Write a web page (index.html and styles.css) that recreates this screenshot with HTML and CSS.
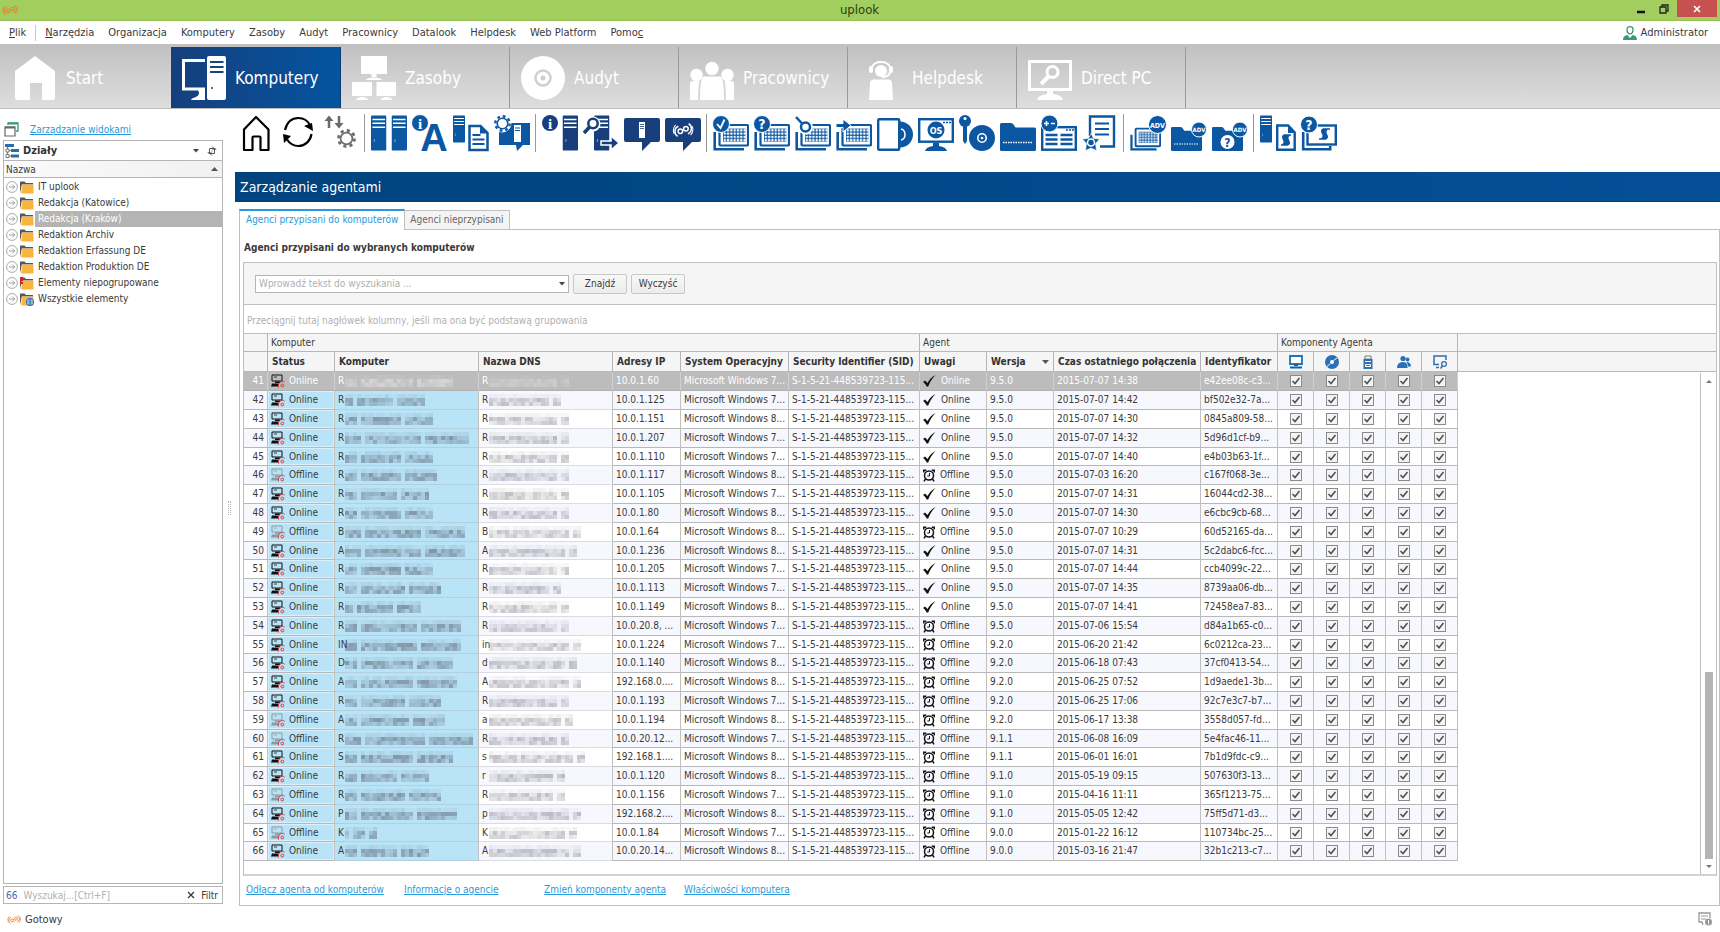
FILE: index.html
```html
<!DOCTYPE html>
<html lang="pl">
<head>
  <meta charset="UTF-8">
  <title>uplook</title>
  <link rel="stylesheet" href="styles.css">
</head>
<body>

  <!-- Symbole ikon -->
  <svg class="symbols" width="0" height="0" aria-hidden="true">
    <defs>
      <pattern id="kratka" width="3.300" height="3.300" patternUnits="userSpaceOnUse" x="10" y="13.500">
        <rect width="3.300" height="3.300" fill="#0b57a2"/>
        <rect x=".7" y=".7" width="2.200" height="2.200" fill="#fff"/>
      </pattern>

      <symbol id="logo" viewBox="0 0 16 12">
        <g fill="none" stroke="currentColor" stroke-width="1.100">
          <circle cx="6" cy="7" r="1.700"/>
          <circle cx="10.200" cy="5" r="1.700"/>
          <path d="M4.500 3.200A4.200 4.200 0 0 0 4 10.700M11.700 8.800A4.200 4.200 0 0 0 12.200 1.300"/>
          <path d="M2.500 2.200A6 6 0 0 0 1.500 9M13.700 9.800A6 6 0 0 0 14.700 3" stroke-width=".8"/>
        </g>
      </symbol>

      <symbol id="serwer" viewBox="0 0 16 36">
        <rect width="16" height="36" rx="1" fill="currentColor"/>
        <path d="M1.500 4h13M1.500 8h13M1.500 12h13" stroke="#fff" stroke-width="1.500"/>
        <path d="M3.500 24.500v2.500" stroke="#fff" stroke-width="1" opacity=".6"/>
      </symbol>

      <symbol id="arkusz" viewBox="0 0 36 36">
        <path d="M1.700 17v17.200h28V33" fill="none" stroke="currentColor" stroke-width="2.600"/>
        <rect x="6.500" y="10" width="28.500" height="20.500" rx="1" fill="#fff" stroke="currentColor" stroke-width="2.200"/>
        <rect x="10" y="13.500" width="22.400" height="13.200" fill="url(#kratka)"/>
      </symbol>

      <symbol id="folder" viewBox="0 0 36 36">
        <path d="M0 9.500Q0 8 1.500 8H11q1.500 0 2.500 1.500l2 3H34.500q1.500 0 1.500 1.500V34.500q0 1.500-1.500 1.500H1.500Q0 36 0 34.500Z" fill="currentColor"/>
      </symbol>

      <symbol id="zebatka" viewBox="0 0 16 16">
        <circle cx="8" cy="8" r="6.800" fill="none" stroke="currentColor" stroke-width="2.200" stroke-dasharray="2.670 2.670"/>
        <circle cx="8" cy="8" r="5" fill="none" stroke="currentColor" stroke-width="1.500"/>
      </symbol>

      <symbol id="komputer" viewBox="0 0 14 14">
        <path d="M1 1h10v6H1Z" fill="none" stroke="currentColor"/>
        <path d="M3 3h3" stroke="currentColor" stroke-width=".8"/>
        <path d="M4 7.500h5v1.500H4z" fill="currentColor"/>
        <path d="M1 9.500h6.500v3H0z" fill="currentColor"/>
        <g fill="none" stroke="#e0343a" stroke-width="1">
          <circle cx="11.300" cy="11.500" r="1.400"/>
          <path d="M7.500 13.500c-.5-3.500 1-6 4-6 1.300 0 2 .3 2.300.800"/>
        </g>
      </symbol>

      <symbol id="ptaszek" viewBox="0 0 13 12">
        <path d="M0 7l2-1.500 2.500 2.500C6.500 4.500 9 1.800 12.500 0 9 3.500 6.800 7.300 5.200 11.500H3.600C2.800 9.500 1.500 8 0 7Z" fill="currentColor"/>
      </symbol>

      <symbol id="zegar" viewBox="0 0 12 13">
        <circle cx="6" cy="6.500" r="4.500" fill="none" stroke="currentColor" stroke-width="1.500"/>
        <path d="M6.500 4v3H4.300" fill="none" stroke="currentColor" stroke-width="1"/>
        <path d="M.8 3.500V1.300h2.500M8.700 1.300h2.500v2.200M2.500 10L1 12.300M9.500 10l1.500 2.300" fill="none" stroke="currentColor" stroke-width="1.500"/>
      </symbol>

      <symbol id="teczka" viewBox="0 0 14 13">
        <path d="M0 12V.5h4.500L6 2h7v2H2Z" fill="#56585c"/>
        <path d="M2 3.500h11.500v9H1Z" fill="#fbb53c"/>
        <path d="M1 12.500L2 3.500h11" fill="none" stroke="#fff" stroke-width=".6" opacity=".6"/>
      </symbol>

      <symbol id="strzalka" viewBox="0 0 12 12">
        <circle cx="6" cy="6" r="5.400" fill="#fff" stroke="#a9a9a9"/>
        <path d="M3 6h5.500M6.300 3.500L8.800 6 6.300 8.500" fill="none" stroke="#a0a0a0"/>
      </symbol>
    </defs>
  </svg>

  <div class="app">
    <header class="titlebar">
      <svg class="titlebar-logo" width="16" height="12"><use href="#logo"/></svg>
      <h1 class="titlebar-name">uplook</h1>
      <div class="window-buttons">
        <button class="window-btn" aria-label="Minimalizuj"><svg width="10" height="10" viewBox="0 0 10 10"><path d="M1 8h8" stroke="#111" stroke-width="2.500"/></svg></button>
        <button class="window-btn" aria-label="Przywróć"><svg width="10" height="10" viewBox="0 0 10 10"><path d="M1 3h6v6H1zM3 3V1h6v6H7" fill="none" stroke="#222" stroke-width="1.300"/></svg></button>
        <button class="window-btn close" aria-label="Zamknij"><svg width="8" height="8" viewBox="0 0 8 8"><path d="M1 1l6 6M7 1L1 7" stroke="#fff" stroke-width="1.700"/></svg></button>
      </div>
    </header>

    <nav class="menu">
      <a href="#"><u>P</u>lik</a>
      <span class="menu-line"></span>
      <a href="#"><u>N</u>arzędzia</a>
      <a href="#">Organizacja</a>
      <a href="#">Komputery</a>
      <a href="#">Zasoby</a>
      <a href="#">Audyt</a>
      <a href="#">Pracownicy</a>
      <a href="#">Datalook</a>
      <a href="#">Helpdesk</a>
      <a href="#">Web Platform</a>
      <a href="#">Pomo<u>c</u></a>
      <a class="user" href="#">
        <svg width="14" height="14" viewBox="0 0 14 14"><path d="M4 3.500C4 1.500 5 .7 7 .7s3 .8 3 2.800c0 2.500-1.200 4.300-3 4.300S4 6 4 3.500Z" fill="#fff" stroke="#3a9a78" stroke-width="1.300"/><path d="M0 14c0-3 1.500-4.500 4.500-5L7 12l2.500-3c3 .5 4.500 2 4.500 5Z" fill="#3a9a78"/></svg>
        Administrator
      </a>
    </nav>

    <nav class="modules">
      <a class="module" href="#"><svg width="44" height="44" viewBox="0 0 44 44"><path d="M22 0L42 15v27q0 2-2 2H29V27H17v17H4q-2 0-2-2V15Z" fill="#fff"/></svg>Start</a>
      <a class="module active" href="#"><svg width="44" height="44" viewBox="0 0 44 44"><path d="M23 4.500H1.500V33H23" fill="none" stroke="#fff" stroke-width="3"/><path d="M16 33h7v11H9c1-3 8-2 8-7Z" fill="#fff"/><rect x="25" width="19" height="44" rx="2" fill="#fff"/><path d="M28 6h13.500M28 11h13.500M28 16h13.500" stroke="#124685" stroke-width="2"/><circle cx="30" cy="32" r="1" fill="#124685"/></svg>Komputery</a>
      <a class="module" href="#"><svg width="44" height="44" viewBox="0 0 44 44"><g fill="#fff"><path d="M9 0h26v18H9zM19.500 18h5v3h-5z"/><path d="M14 24q0-2 8-2.500 8 .5 8 2.500Z"/><path d="M0 26h20v14H0zM24.500 26H44v14H24.500zM4 44q1-3 6-3t6 3ZM28.500 44q1-3 6-3t6 3Z"/></g></svg>Zasoby</a>
      <a class="module" href="#"><svg width="44" height="44" viewBox="0 0 44 44"><circle cx="22" cy="22" r="22" fill="#fff"/><circle cx="22" cy="22" r="7.500" fill="none" stroke="#cfcfcf" stroke-width="2.500"/><circle cx="22" cy="22" r="2.500" fill="#cfcfcf"/></svg>Audyt</a>
      <a class="module" href="#"><svg width="44" height="44" viewBox="0 0 44 44"><g fill="#fff"><circle cx="22" cy="12.500" r="6.700"/><circle cx="6.500" cy="19" r="6.200"/><circle cx="37.500" cy="19" r="6.200"/><path d="M0 44V28q0-3 3-3h6.500q-1.500 6-1.500 19ZM44 44V28q0-3-3-3h-6.500q1.500 6 1.500 19ZM10 44q0-23 3.500-23.500h17Q34 21 34 44Z"/></g></svg>Pracownicy</a>
      <a class="module" href="#"><svg width="44" height="44" viewBox="0 0 44 44"><g fill="#fff"><circle cx="22" cy="15" r="6"/><path d="M10 44l1-17q0-3 3-3.500h16q3 .5 3 3.500l1 17Z"/><rect x="10" y="10" width="4" height="7" rx="2"/><rect x="30" y="10" width="4" height="7" rx="2"/></g><path d="M13 11Q15 6 22 6t9 5M31 16q-1 5-8 5" fill="none" stroke="#fff" stroke-width="2"/></svg>Helpdesk</a>
      <a class="module" href="#"><svg width="44" height="44" viewBox="0 0 44 44"><rect x="1.500" y="5.500" width="41" height="28" fill="none" stroke="#fff" stroke-width="3"/><circle cx="24.500" cy="16" r="5.500" fill="none" stroke="#fff" stroke-width="3"/><path d="M20.500 20.500L13 28" stroke="#fff" stroke-width="4"/><path d="M19 34h6v4q9 1 10 6H9q1-5 10-6Z" fill="#fff"/></svg>Direct PC</a>
    </nav>

    <div class="workspace">
      <aside class="sidebar">
        <div class="views">
          <svg width="15" height="15" viewBox="0 0 15 15"><path d="M4 3V1h10v8h-2" fill="none" stroke="#3a9a78" stroke-width="1.300"/><path d="M4 1.500h10" stroke="#3a9a78" stroke-width="2"/><path d="M1 5h10v9H1z" fill="#fff" stroke="#666" stroke-width="1.200"/><path d="M1 5.500h10" stroke="#666" stroke-width="2"/></svg>
          <a class="link" href="#">Zarządzanie widokami</a>
        </div>
        <section class="tree-box">
          <div class="tree-title">
            <svg width="14" height="14" viewBox="0 0 14 14"><path d="M0 0h9v3H0zM6 5h8v3H6zM6 10.500h8v3H6z" fill="#2b6cab"/><path d="M2.500 3v2M3.500 6.500H6M3.500 12H6M2.500 8v2" stroke="#777"/><path d="M1 5h3v3H1zM1 10.500h3v3H1z" fill="#fff" stroke="#777"/></svg>
            <h2>Działy</h2>
            <button class="icon-btn" aria-label="Wybierz widok"><svg width="6" height="4" viewBox="0 0 6 4"><path d="M0 0h6L3 3.500Z" fill="#444"/></svg></button>
            <button class="icon-btn" aria-label="Odśwież"><svg width="10" height="10" viewBox="0 0 10 10"><path d="M2.500 8V2.500H7M5 .5l2 2-2 2M7.500 2v5.500H3M5 5.500l-2 2 2 2M.8 6l1.700 2M9.200 4L7.500 2" fill="none" stroke="#444" stroke-width=".9"/></svg></button>
          </div>
          <button class="tree-head">Nazwa <svg width="7" height="4" viewBox="0 0 7 4"><path d="M0 4h7L3.500 0Z" fill="#555"/></svg></button>
          <ul class="tree" id="drzewo"></ul>
        </section>
        <div class="tree-search">
          <span class="count">66</span>
          <input type="text" aria-label="Wyszukaj" placeholder="Wyszukaj...[Ctrl+F]">
          <button class="icon-btn" aria-label="Wyczyść filtr"><svg width="8" height="8" viewBox="0 0 8 8"><path d="M1 1l6 6M7 1L1 7" stroke="#333" stroke-width="1.200"/></svg></button>
          <button class="icon-btn">Filtr</button>
        </div>
      </aside>

      <div class="splitter"><span></span></div>

      <main class="content">
        <div class="toolbar">
          <div class="tool-group plain">
            <button aria-label="Start"><svg viewBox="0 0 36 36"><path d="M6 35V14.500L18 2l12.500 12.500V35h-8V22.500q0-1-1-1h-6q-1 0-1 1V35Z" fill="none" stroke="#000" stroke-width="2.200" stroke-linejoin="round"/></svg></button>
            <button aria-label="Odśwież"><svg viewBox="0 0 36 36"><path d="M5 15C7 7 12 3 18.500 3c5 0 9 2.500 11.500 7M31.500 19c-1 7-6.500 12-13 12C14 31 10 29 7 24.500" fill="none" stroke="#000" stroke-width="2.200"/><path d="M24 11l8-3 1 8ZM3 19l8 2-7 7Z" fill="#000"/></svg></button>
            <button class="grey" aria-label="Synchronizacja"><svg viewBox="0 0 36 36"><path d="M7 13V4M17 1v9" stroke="currentColor" stroke-width="2.500"/><path d="M2.500 6L7 .5 11.500 6ZM12.500 8L17 13.500 21.500 8Z" fill="currentColor"/><use href="#zebatka" x="15" y="14" width="19" height="19"/></svg></button>
          </div>
          <div class="tool-group">
            <button aria-label="Komputery"><svg viewBox="0 0 36 36"><use href="#serwer" width="15.500" height="36"/><use href="#serwer" x="20.500" width="15.500" height="36"/></svg></button>
            <button aria-label="Informacje"><svg viewBox="0 0 36 36"><text x="22" y="35.500" font-size="38" class="svg-bold">A</text><circle cx="8" cy="8" r="8.500" fill="currentColor" stroke="#fff"/><text x="8" y="13.500" font-size="15" class="svg-serif">i</text></svg></button>
            <button aria-label="Raport"><svg viewBox="0 0 36 36"><use href="#serwer" width="12" height="28"/><path d="M16.500 11h11l7 7v17h-18Z" fill="#fff" stroke="currentColor" stroke-width="2.500"/><path d="M27 10v8.500h8.500Z" fill="currentColor"/><path d="M19.500 20h8M19.500 24.500h12M19.500 29h12" stroke="currentColor" stroke-width="2"/></svg></button>
            <button aria-label="Zadania"><svg viewBox="0 0 36 36"><path d="M5 8h31v22h-7l-6 6-1-6H5Z" fill="currentColor"/><circle cx="8" cy="8" r="9.500" fill="#fff"/><use href="#zebatka" width="17" height="17"/><rect x="20" y="10" width="7" height="17" fill="#fff"/><path d="M21 13h5M21 15.500h5" stroke="currentColor"/></svg></button>
          </div>
          <div class="tool-group dark">
            <button aria-label="Informacje o komputerze"><svg viewBox="0 0 36 36"><circle cx="8" cy="8" r="8" fill="currentColor"/><text x="8" y="13.500" font-size="15" class="svg-serif">i</text><use href="#serwer" x="20.500" width="15.500" height="36"/></svg></button>
            <button aria-label="Szukaj komputera"><svg viewBox="0 0 36 36"><use href="#serwer" x="11" width="15.500" height="36"/><circle cx="10" cy="9" r="7.500" fill="#fff"/><circle cx="10" cy="8.500" r="4.700" fill="#fff" stroke="currentColor" stroke-width="2.500"/><path d="M6.500 12L1 18" stroke="currentColor" stroke-width="3.500"/><path d="M18 26h10v-5l8 7-8 7v-5H18Z" fill="currentColor" stroke="#fff" stroke-width="1.500"/></svg></button>
            <button aria-label="Wiadomość do komputera"><svg viewBox="0 0 36 36"><path d="M0 5q0-2 2-2h32q2 0 2 2v20q0 2-2 2h-7l-9 9V27H2q-2 0-2-2Z" fill="currentColor"/><rect x="15" y="7" width="6" height="16" fill="#fff"/><path d="M16 9.500h4M16 11.500h4M16 13.500h4" stroke="currentColor" stroke-width=".8"/></svg></button>
            <button aria-label="Wiadomość"><svg viewBox="0 0 36 36"><path d="M0 5q0-2 2-2h32q2 0 2 2v20q0 2-2 2h-7l-9 9V27H2q-2 0-2-2Z" fill="currentColor"/><use href="#logo" x="7" y="7" width="22" height="16" class="white"/></svg></button>
          </div>
          <div class="tool-group">
            <button aria-label="Audyt wykonany"><svg viewBox="0 0 36 36"><use href="#arkusz"/><circle cx="8" cy="9" r="8.500" fill="currentColor" stroke="#fff"/><path d="M4 9l3.500 4L11.500 4.500" fill="none" stroke="#fff" stroke-width="1.800"/></svg></button>
            <button aria-label="Audyt nieznany"><svg viewBox="0 0 36 36"><use href="#arkusz"/><circle cx="8" cy="9" r="8.500" fill="currentColor" stroke="#fff"/><text x="8" y="14" font-size="14" class="svg-white">?</text></svg></button>
            <button aria-label="Szukaj w audycie"><svg viewBox="0 0 36 36"><use href="#arkusz"/><circle cx="10.500" cy="12" r="7.500" fill="#fff"/><circle cx="10.500" cy="12" r="4.500" fill="#fff" stroke="currentColor" stroke-width="2.500"/><path d="M7 8.500L1 2" stroke="currentColor" stroke-width="2.500"/></svg></button>
            <button aria-label="Przenieś"><svg viewBox="0 0 36 36"><use href="#arkusz"/><path d="M0 8.500h7V4l8 6.500L7 17v-4.500H0Z" fill="currentColor" stroke="#fff"/></svg></button>
            <button aria-label="Oprogramowanie"><svg viewBox="0 0 36 36"><circle cx="23" cy="19.500" r="13" fill="currentColor"/><path d="M24 14q4 1 4 5.500T24 25" fill="none" stroke="#fff" stroke-width="1.500"/><rect x="1.200" y="4.200" width="21" height="30.500" rx="1" fill="#fff" stroke="currentColor" stroke-width="2.400"/></svg></button>
            <button aria-label="System operacyjny"><svg viewBox="0 0 36 36"><rect x="1.200" y="4.200" width="33.600" height="22.500" fill="#fff" stroke="currentColor" stroke-width="2.400"/><circle cx="18" cy="15" r="8.500" fill="currentColor"/><text x="18" y="18.500" font-size="9" class="svg-white">OS</text><path d="M25 7.500h8" stroke="currentColor" stroke-width="1.500" stroke-dasharray="2 1"/><path d="M15 28h6v3q7 1 8 5H7q1-4 8-5Z" fill="currentColor"/></svg></button>
            <button aria-label="Licencje"><svg viewBox="0 0 36 36"><circle cx="6" cy="6" r="6" fill="currentColor"/><circle cx="6" cy="3.500" r="1.500" fill="#fff"/><path d="M4 11h4v15l-2 3-2-3Z" fill="currentColor"/><circle cx="23" cy="23" r="13" fill="currentColor"/><circle cx="23" cy="23" r="4.200" fill="none" stroke="#fff" stroke-width="1.600"/><circle cx="23" cy="23" r="1.300" fill="#fff"/></svg></button>
            <button aria-label="Pliki"><svg viewBox="0 0 36 36"><use href="#folder"/><path d="M3 27.500h30" stroke="#fff" stroke-width="1.300" stroke-dasharray="1.500 1"/></svg></button>
            <button aria-label="Zmiany"><svg viewBox="0 0 36 36"><rect x="1.200" y="12.200" width="33.600" height="22.500" fill="#fff" stroke="currentColor" stroke-width="2.400"/><path d="M4.500 20h12M4.500 24.500h12M4.500 29h12M19.500 20h12M19.500 24.500h12M19.500 29h12" stroke="currentColor" stroke-width="2.400"/><path d="M25 15h8" stroke="currentColor" stroke-width="1.500" stroke-dasharray="2 1"/><circle cx="8.500" cy="8.500" r="8.500" fill="currentColor" stroke="#fff"/><path d="M3 8.500h5M5.500 6v5M10 8.500h4" stroke="#fff" stroke-width="1.500"/></svg></button>
            <button aria-label="Certyfikaty"><svg viewBox="0 0 36 36"><path d="M8 21V1.500h24v30H18" fill="#fff" stroke="currentColor" stroke-width="2.400"/><path d="M13 8.500h14M13 14h14M13 19.500h14" stroke="currentColor" stroke-width="2.200"/><path d="M9 18.500l2.600 5 5.900.500-4 4.500 1 7-5.500-2.500-5.500 2.500 1-7-4-4.500 5.900-.500Z" fill="currentColor" stroke="#fff" stroke-width=".6"/><circle cx="9" cy="27.500" r="3.500" fill="none" stroke="#fff" stroke-width="1.500"/></svg></button>
          </div>
          <div class="tool-group">
            <button aria-label="Audyt ADV"><svg viewBox="0 0 36 36"><use href="#arkusz" y="5" width="31" height="31"/><circle cx="27.500" cy="9.500" r="9" fill="currentColor" stroke="#fff"/><text x="27.500" y="12.500" font-size="7" class="svg-white">ADV</text></svg></button>
            <button aria-label="Pliki ADV"><svg viewBox="0 0 36 36"><use href="#folder" y="5" width="31" height="31"/><path d="M3 29h25" stroke="#fff" stroke-dasharray="1.500 1"/><circle cx="28" cy="14.500" r="7.500" fill="currentColor" stroke="#fff"/><text x="28" y="17" font-size="6" class="svg-white">ADV</text></svg></button>
            <button aria-label="Nieznane pliki ADV"><svg viewBox="0 0 36 36"><use href="#folder" y="5" width="31" height="31"/><circle cx="15.500" cy="27" r="7" fill="#fff"/><text x="15.500" y="31.500" font-size="12" class="svg-blue">?</text><circle cx="28" cy="14.500" r="7.500" fill="currentColor" stroke="#fff"/><text x="28" y="17" font-size="6" class="svg-white">ADV</text></svg></button>
          </div>
          <div class="tool-group">
            <button aria-label="Skrypty komputera"><svg viewBox="0 0 36 36"><use href="#serwer" width="12" height="28"/><path d="M17.200 10.500h11l6.500 7v17.300H17.200Z" fill="#fff" stroke="currentColor" stroke-width="2.400"/><path d="M28 10v8h7.500Z" fill="currentColor"/><path d="M31 20h-6.500q-3 1-1 4.500t-1 5.500H21h6.500q3-1 1-4.500t1-5.500Z" fill="currentColor" stroke="currentColor" stroke-width="1.500"/></svg></button>
            <button aria-label="Nieznane skrypty"><svg viewBox="0 0 36 36"><path d="M2.200 17v17.200h27V31" fill="none" stroke="currentColor" stroke-width="2.600"/><rect x="6.500" y="10.500" width="28.300" height="19" fill="#fff" stroke="currentColor" stroke-width="2.400"/><path d="M29 14h-6.500q-3 1-1 4.500t-1 5.500H18h6.500q3-1 1-4.500t1-5.500Z" fill="currentColor" stroke="currentColor" stroke-width="1.500"/><circle cx="8" cy="9.500" r="8.500" fill="currentColor" stroke="#fff"/><text x="8" y="14.500" font-size="14" class="svg-white">?</text></svg></button>
          </div>
        </div>

        <h2 class="page-title">Zarządzanie agentami</h2>

        <div class="tabs" role="tablist">
          <button class="tab active" role="tab" aria-selected="true">Agenci przypisani do komputerów</button>
          <button class="tab" role="tab" aria-selected="false">Agenci nieprzypisani</button>
        </div>

        <section class="panel">
          <h3>Agenci przypisani do wybranych komputerów</h3>
          <div class="box">
            <form class="search">
              <div class="combo">
                <input type="text" aria-label="Tekst do wyszukania" placeholder="Wprowadź tekst do wyszukania ...">
                <button type="button" class="icon-btn" aria-label="Historia wyszukiwania"><svg width="6" height="4" viewBox="0 0 6 4"><path d="M0 0h6L3 3.500Z" fill="#444"/></svg></button>
              </div>
              <button type="button" class="btn">Znajdź</button>
              <button type="button" class="btn">Wyczyść</button>
            </form>
            <p class="group-hint">Przeciągnij tutaj nagłówek kolumny, jeśli ma ona być podstawą grupowania</p>

            <div class="grid">
              <table>
                <colgroup>
                  <col class="c-nr"><col class="c-status"><col class="c-komputer"><col class="c-dns"><col class="c-ip"><col class="c-system"><col class="c-sid"><col class="c-uwagi"><col class="c-wersja"><col class="c-czas"><col class="c-ident"><col class="c-check"><col class="c-check"><col class="c-check"><col class="c-check"><col class="c-check"><col>
                </colgroup>
                <thead>
                  <tr class="bands">
                    <th></th>
                    <th colspan="6">Komputer</th>
                    <th colspan="4">Agent</th>
                    <th colspan="5">Komponenty Agenta</th>
                    <th></th>
                  </tr>
                  <tr class="heads">
                    <th></th>
                    <th>Status</th>
                    <th>Komputer</th>
                    <th>Nazwa DNS</th>
                    <th>Adresy IP</th>
                    <th>System Operacyjny</th>
                    <th>Security Identifier (SID)</th>
                    <th>Uwagi</th>
                    <th class="sorted">Wersja <svg width="7" height="4" viewBox="0 0 7 4"><path d="M0 0h7L3.500 4Z" fill="#555"/></svg></th>
                    <th>Czas ostatniego połączenia</th>
                    <th>Identyfikator</th>
                    <th class="comp"><svg width="14" height="14" viewBox="0 0 14 14" role="img" aria-label="Komputer"><path d="M1 1h12v8H1z" fill="#fff" stroke="#1b74bd" stroke-width="1.800"/><path d="M5 9h4v2H5zM1 11.500h12v2H1z" fill="#1b5ea0"/></svg></th>
                    <th class="comp"><svg width="14" height="14" viewBox="0 0 14 14" role="img" aria-label="Płyty"><circle cx="7" cy="7" r="7" fill="#2c6fb3"/><circle cx="7" cy="7" r="2" fill="#fff"/><path d="M8.500 5.500L12 3M5.500 8.500L2 11.500" stroke="#fff"/></svg></th>
                    <th class="comp"><svg width="14" height="14" viewBox="0 0 14 14" role="img" aria-label="USB"><path d="M4 1h6v3H4z" fill="#fff" stroke="#777"/><path d="M2.500 4h9v10h-9z" fill="#2c6fb3"/><path d="M4 6.500h6M4.500 9.500h5v2h-5z" fill="none" stroke="#fff"/></svg></th>
                    <th class="comp"><svg width="14" height="14" viewBox="0 0 14 14" role="img" aria-label="Pracownicy"><g fill="#2c6fb3"><circle cx="6" cy="3.500" r="2.600"/><path d="M0 13q0-5.500 5.500-6T10.500 13Z"/><circle cx="10.500" cy="4.500" r="2"/><path d="M9.500 7q4.500 0 4.500 4.500h-3q0-2.500-1.500-4.500Z"/></g></svg></th>
                    <th class="comp"><svg width="14" height="14" viewBox="0 0 14 14" role="img" aria-label="Direct PC"><path d="M6 9.500H1V1h12v4" fill="none" stroke="#2c6fb3" stroke-width="1.500"/><path d="M3 12.500h3" stroke="#2c6fb3" stroke-width="1.500"/><circle cx="11" cy="9" r="2.400" fill="none" stroke="#2c6fb3" stroke-width="1.300"/><path d="M9.500 11L7.500 13.500" stroke="#2c6fb3" stroke-width="1.500"/></svg></th>
                    <th></th>
                  </tr>
                </thead>
                <tbody id="agenci"></tbody>
              </table>
              <div class="scrollbar">
                <svg width="6" height="3" viewBox="0 0 6 3"><path d="M0 3h6L3 0Z" fill="#777"/></svg>
                <span class="thumb"></span>
                <svg width="6" height="3" viewBox="0 0 6 3"><path d="M0 0h6L3 3Z" fill="#777"/></svg>
              </div>
            </div>
          </div>
          <div class="actions">
            <a class="link" href="#">Odłącz agenta od komputerów</a>
            <a class="link" href="#">Informacje o agencie</a>
            <a class="link" href="#">Zmień komponenty agenta</a>
            <a class="link" href="#">Właściwości komputera</a>
          </div>
        </section>
      </main>
    </div>

    <footer class="statusbar">
      <svg class="titlebar-logo" width="14" height="11"><use href="#logo"/></svg>
      <span>Gotowy</span>
      <svg class="notes" width="14" height="14" viewBox="0 0 14 14"><path d="M12 6V1H1v9h3l1 3" fill="none" stroke="#999" stroke-width="1.300"/><path d="M3 4h7M3 7h5" stroke="#999" stroke-width="1.200"/><circle cx="10.500" cy="10" r="3.500" fill="#999"/><path d="M10.500 8v3M10.500 11.500v1" stroke="#fff"/></svg>
    </footer>
  </div>

  <script src="script.js"></script>
</body>
</html>
```
FILE: styles.css
```css
* {
  box-sizing: border-box;
}

body {
  margin: 0;
  background-color: white;
  color: #3a3a3a;
  font-family: 'DejaVu Sans Condensed', 'DejaVu Sans', sans-serif;
  font-size: 10px;
}

h1, h2, h3, p, ul {
  margin: 0;
  padding: 0;
}

button, input {
  font-family: inherit;
  font-size: inherit;
  color: inherit;
}

button {
  background: none;
  border: none;
  padding: 0;
}

svg {
  display: block;
}

.symbols {
  position: absolute;
}

.app {
  display: flex;
  flex-direction: column;
  min-height: 100vh;
}

/* Pasek tytułu */
.titlebar {
  display: grid;
  grid-template-columns: 1fr auto 1fr;
  align-items: center;
  height: 21px;
  padding: 0 3px 0 2px;
  background-color: #a1ce5f;
  border-bottom: 1px solid #93bf55;
}

.titlebar-logo {
  color: #f0802a;
}

.titlebar-name {
  font-size: 13px;
  font-weight: normal;
  line-height: 20px;
  color: #2d3d14;
}

.window-buttons {
  display: flex;
  justify-content: flex-end;
  align-self: start;
}

.window-btn {
  display: flex;
  align-items: center;
  justify-content: center;
  width: 23px;
  height: 17px;
}

.window-btn.close {
  width: 40px;
  margin-left: 2px;
  background-color: #c75050;
}

/* Menu */
.menu {
  display: flex;
  align-items: center;
  gap: 14px;
  height: 23px;
  padding: 0 12px 0 9px;
  font-size: 11px;
}

.menu a {
  color: #3a3a3a;
  text-decoration: none;
}

.menu-line {
  width: 1px;
  height: 16px;
  margin: 0 -5px;
  background-color: #c8c8c8;
}

.menu .user {
  display: flex;
  align-items: center;
  gap: 4px;
  margin-left: auto;
}

/* Moduły */
.modules {
  display: flex;
  height: 65px;
  padding-top: 3px;
  background: linear-gradient(#c0c0c0, #dedede);
  border-bottom: 1px solid #bdbdbd;
}

.module {
  display: flex;
  align-items: center;
  gap: 9px;
  width: 169px;
  padding-left: 11px;
  border-right: 1px solid #999;
  color: white;
  font-size: 17px;
  text-decoration: none;
}

.module:first-child {
  width: 171px;
  padding-left: 13px;
  border-right: none;
}

.module.active {
  width: 170px;
  border-right: 1px solid #0b3a70;
  background: linear-gradient(90deg, #163f7c, #0454a0);
}

/* Obszar roboczy */
.workspace {
  display: flex;
  flex: 1;
}

.sidebar {
  display: flex;
  flex-direction: column;
  width: 220px;
  margin-left: 3px;
  padding-bottom: 2px;
}

.views {
  display: flex;
  align-items: center;
  gap: 11px;
  height: 31px;
  padding: 9px 0 0 1px;
}

.link {
  color: #2a9ade;
}

.tree-box {
  flex: 1;
  border: 1px solid #b5b5b5;
}

.tree-title {
  display: flex;
  align-items: center;
  gap: 4px;
  height: 19px;
  padding: 0 5px 0 1px;
}

.tree-title h2 {
  flex: 1;
  font-size: 11px;
  color: #333;
}

.tree-title .icon-btn {
  margin-left: 4px;
}

.tree-head {
  display: flex;
  align-items: center;
  justify-content: space-between;
  width: 100%;
  height: 18px;
  padding: 0 4px 0 2px;
  background: linear-gradient(90deg, #fafafa, #f1f1f1);
  border-top: 1px solid #b5b5b5;
  border-bottom: 1px solid #b5b5b5;
}

.tree {
  padding-top: 1px;
  list-style: none;
}

.tree a {
  display: flex;
  align-items: center;
  height: 16px;
  padding-left: 2px;
  color: #3a3a3a;
  text-decoration: none;
}

.tree span {
  flex: 1;
  margin-left: 1px;
  padding-left: 3px;
  line-height: 16px;
}

.tree svg + svg {
  margin-left: 2px;
}

.tree .selected span {
  background-color: #b4b4b4;
  color: white;
}

.tree-search {
  display: flex;
  align-items: center;
  gap: 6px;
  height: 18px;
  margin-top: 2px;
  padding: 0 4px 0 2px;
  border: 1px solid #b5b5b5;
}

.tree-search input {
  flex: 1;
  min-width: 0;
  padding: 0;
  border: none;
}

.count {
  color: #3d6cb4;
}

::placeholder {
  color: #b0b0b0;
  opacity: 1;
}

.splitter {
  display: flex;
  align-items: center;
  justify-content: center;
  width: 12px;
}

.splitter span {
  width: 3px;
  height: 14px;
  border: 1px dotted #b5b5b5;
  border-width: 0 1px;
}

/* Pasek narzędzi */
.content {
  display: flex;
  flex: 1;
  flex-direction: column;
  min-width: 0;
}

.toolbar {
  display: flex;
  height: 63px;
  padding: 5px 0 0 3px;
}

.tool-group {
  display: flex;
  gap: 5px;
  height: 38px;
  padding: 1px 5px 0 6px;
  border-left: 1px solid #999;
  color: #0b57a2;
}

.tool-group.plain {
  gap: 6px;
  padding: 1px 6px 0 0;
  border-left: none;
}

.tool-group.dark {
  color: #183f7c;
}

.tool-group button {
  width: 36px;
  height: 36px;
}

.tool-group svg {
  overflow: visible;
}

.tool-group button.grey {
  color: #6a6a6a;
}

.white {
  color: white;
}

.svg-bold {
  font-family: 'Liberation Sans', sans-serif;
  font-weight: bold;
  fill: currentColor;
  text-anchor: middle;
}

.svg-serif {
  font-family: 'Liberation Serif', serif;
  font-weight: bold;
  fill: white;
  text-anchor: middle;
}

.svg-white {
  font-weight: bold;
  fill: white;
  text-anchor: middle;
}

.svg-blue {
  font-weight: bold;
  fill: currentColor;
  text-anchor: middle;
}

.page-title {
  height: 30px;
  padding-left: 5px;
  background: linear-gradient(90deg, #00437e, #054f97);
  border-bottom: 1px solid #1d3560;
  color: white;
  font-size: 14px;
  font-weight: normal;
  line-height: 31px;
}

/* Zakładki */
.tabs {
  display: flex;
  align-items: flex-end;
  height: 27px;
  padding-left: 4px;
}

.tab {
  height: 19px;
  padding: 0 5px 1px;
  background-color: #f4f4f4;
  border: 1px solid #c0c0c0;
  border-left: none;
  border-bottom: none;
  color: #666;
}

.tab.active {
  height: 21px;
  padding: 0 6px 2px;
  background-color: white;
  border-left: 1px solid #c0c0c0;
  border-top: 2px solid #2a9ade;
  margin-bottom: -1px;
  color: #2a9ade;
  z-index: 1;
}

.panel {
  display: flex;
  flex: 1;
  flex-direction: column;
  margin-left: 4px;
  padding: 0 2px 0 3px;
  border: 1px solid #c0c0c0;
}

.panel h3 {
  padding-left: 1px;
  font-size: 10px;
  line-height: 35px;
  height: 32px;
}

.box {
  display: flex;
  flex: 1;
  flex-direction: column;
  border: 1px solid #c0c0c0;
  border-bottom: 2px solid #d2d2d2;
}

.search {
  display: flex;
  align-items: center;
  gap: 4px;
  height: 42px;
  padding-left: 11px;
  background-color: #f5f5f5;
  border-bottom: 1px solid #c0c0c0;
}

.combo {
  display: flex;
  align-items: center;
  width: 314px;
  height: 18px;
  padding-right: 3px;
  background-color: white;
  border: 1px solid #b5b5b5;
}

.combo input {
  flex: 1;
  padding: 0 3px;
  border: none;
}

.btn {
  width: 54px;
  height: 20px;
  background: linear-gradient(#f8f8f8, #ececec);
  border: 1px solid #c8c8c8;
  border-radius: 2px;
}

.group-hint {
  height: 28px;
  padding-left: 3px;
  color: #b0b0b0;
  line-height: 31px;
}

/* Tabela agentów */
.grid {
  position: relative;
  flex: 1;
}

table {
  width: 100%;
  table-layout: fixed;
  border-spacing: 0;
}

.c-nr { width: 24px; }
.c-status { width: 67px; }
.c-komputer { width: 144px; }
.c-dns { width: 134px; }
.c-ip { width: 68px; }
.c-system { width: 108px; }
.c-sid { width: 131px; }
.c-uwagi { width: 67px; }
.c-wersja { width: 67px; }
.c-czas { width: 147px; }
.c-ident { width: 77px; }
.c-check { width: 36px; }

th, td {
  height: 19px;
  padding: 0 0 0 3px;
  border-right: 1px solid #c0c0c0;
  border-bottom: 1px solid #b8b8b8;
  text-align: left;
  white-space: nowrap;
  line-height: 12px;
}

th {
  background-color: #f5f5f5;
  border-right-color: #b5b5b5;
}

.bands th {
  border-top: 1px solid #c0c0c0;
  font-weight: normal;
}

.heads th {
  height: 20px;
  padding-left: 4px;
  color: #333;
}

.heads th.comp {
  padding: 0;
}

th:last-child {
  border-right: none;
}

.comp svg {
  margin: 0 auto;
}

.sorted svg {
  float: right;
  margin: 4px 4px 0 0;
}

tbody tr:nth-child(even) td {
  background-color: #f7f8fe;
}

tbody tr:nth-child(5n) td {
  height: 18px;
}

td.nr {
  padding-right: 3px;
  text-align: right;
}

.with-icon {
  display: flex;
  align-items: center;
  gap: 4px;
}

tbody tr td.status {
  background-color: #b9e4f7;
  box-shadow: inset 0 0 0 1px #d9f0fa;
}

tbody tr td.komputer {
  background-color: #b9e4f7;
  border-bottom-color: #b3cfdc;
}

tbody tr td.dns {
  border-bottom-color: #dcdce4;
}

.offline .status .with-icon svg {
  color: #8a9aa3;
}

.status svg, .uwagi svg {
  color: #111;
}

.uwagi .with-icon {
  gap: 5px;
}

.hidden-name {
  display: flex;
  align-items: center;
}

.hidden-name span {
  width: 7px;
}

.hidden-name svg {
  fill: #4a4a5c;
}

.current .hidden-name svg {
  fill: #eee;
}

tbody tr.current td {
  background-color: #bcbcbc;
  border-right-color: #cfcfcf;
  border-bottom-color: #b0b0b0;
  box-shadow: none;
  color: white;
}

td.check {
  padding: 0;
}

.check input {
  display: block;
  appearance: none;
  width: 12px;
  height: 12px;
  margin: 0 auto;
  border: 1px solid #8a8a8a;
  background-color: #f4f4f4;
}

.check input:checked {
  background-image: url("data:image/svg+xml,%3Csvg xmlns='http://www.w3.org/2000/svg' viewBox='0 0 10 10'%3E%3Cpath d='M1.500 5l2.500 2.500L8.500 2' fill='none' stroke='%23505050' stroke-width='1.600'/%3E%3C/svg%3E");
}

.scrollbar {
  position: absolute;
  top: 40px;
  right: 0;
  bottom: 0;
  display: flex;
  flex-direction: column;
  align-items: center;
  width: 16px;
  padding: 7px 0 6px;
  border-left: 1px solid #c0c0c0;
}

.thumb {
  width: 8px;
  height: 187px;
  margin: auto 0 6px;
  background-color: #b4b4b4;
}

.actions {
  display: grid;
  grid-template-columns: 158px 140px 140px auto;
  align-items: center;
  height: 29px;
  padding: 0 0 3px 3px;
}

.statusbar {
  display: flex;
  align-items: center;
  gap: 4px;
  height: 26px;
  padding: 0 8px 0 7px;
  font-size: 11px;
}

.notes {
  margin-left: auto;
}
```
FILE: script.js
```js
const dzialy = [
  'IT uplook',
  'Redakcja (Katowice)',
  'Redakcja (Kraków)',
  'Redaktion Archiv',
  'Redaktion Erfassung DE',
  'Redaktion Produktion DE',
  'Elementy niepogrupowane',
  'Wszystkie elementy'
];

// nr, status, litera, szerokość, litera dns, szerokość dns, ip, system, uwagi, wersja, czas, identyfikator
const agenci = [
  [41, 'Online', 'R', 108, 'R', 80, '10.0.1.60', 7, 'Online', '9.5.0', '2015-07-07 14:38', 'e42ee08c-c3...'],
  [42, 'Online', 'R', 81, 'R', 75, '10.0.1.125', 7, 'Online', '9.5.0', '2015-07-07 14:42', 'bf502e32-7a...'],
  [43, 'Online', 'R', 90, 'R', 80, '10.0.1.151', 8, 'Online', '9.5.0', '2015-07-07 14:30', '0845a809-58...'],
  [44, 'Online', 'R', 126, 'R', 80, '10.0.1.207', 7, 'Online', '9.5.0', '2015-07-07 14:32', '5d96d1cf-b9...'],
  [45, 'Online', 'R', 90, 'R', 80, '10.0.1.110', 7, 'Online', '9.5.0', '2015-07-07 14:40', 'e4b03b63-1f...'],
  [46, 'Offline', 'R', 95, 'R', 80, '10.0.1.117', 8, 'Offline', '9.5.0', '2015-07-03 16:20', 'c167f068-3e...'],
  [47, 'Online', 'R', 85, 'R', 80, '10.0.1.105', 7, 'Online', '9.5.0', '2015-07-07 14:31', '16044cd2-38...'],
  [48, 'Online', 'R', 90, 'R', 80, '10.0.1.80', 8, 'Online', '9.5.0', '2015-07-07 14:30', 'e6cbc9cb-68...'],
  [49, 'Offline', 'B', 121, 'B', 94, '10.0.1.64', 8, 'Offline', '9.5.0', '2015-07-07 10:29', '60d52165-da...'],
  [50, 'Online', 'A', 121, 'A', 90, '10.0.1.236', 8, 'Online', '9.5.0', '2015-07-07 14:31', '5c2dabc6-fcc...'],
  [51, 'Online', 'R', 90, 'R', 80, '10.0.1.205', 7, 'Online', '9.5.0', '2015-07-07 14:44', 'ccb4099c-22...'],
  [52, 'Online', 'R', 99, 'R', 75, '10.0.1.113', 7, 'Online', '9.5.0', '2015-07-07 14:35', '8739aa06-db...'],
  [53, 'Online', 'R', 77, 'R', 80, '10.0.1.149', 8, 'Online', '9.5.0', '2015-07-07 14:41', '72458ea7-83...'],
  [54, 'Online', 'R', 117, 'R', 80, '10.0.20.8, ...', 7, 'Offline', '9.5.0', '2015-07-06 15:54', 'd84a1b65-c0...'],
  [55, 'Online', 'IN', 117, 'in', 94, '10.0.1.224', 7, 'Offline', '9.2.0', '2015-06-20 21:42', '6c0212ca-23...'],
  [56, 'Online', 'D', 108, 'd', 90, '10.0.1.140', 8, 'Offline', '9.2.0', '2015-06-18 07:43', '37cf0413-54...'],
  [57, 'Online', 'A', 112, 'A', 94, '192.168.0....', 8, 'Offline', '9.2.0', '2015-06-25 07:52', '1d9aede1-3b...'],
  [58, 'Online', 'R', 98, 'R', 80, '10.0.1.193', 7, 'Offline', '9.2.0', '2015-06-25 17:06', '92c7e3c7-b7...'],
  [59, 'Offline', 'A', 103, 'a', 85, '10.0.1.194', 8, 'Offline', '9.2.0', '2015-06-17 13:38', '3558d057-fd...'],
  [60, 'Offline', 'R', 130, 'R', 80, '10.0.20.12...', 7, 'Offline', '9.1.1', '2015-06-08 16:09', '5e4fac46-11...'],
  [61, 'Online', 'S', 108, 's', 98, '192.168.1....', 8, 'Offline', '9.1.1', '2015-06-01 16:01', '7b1d9fdc-c9...'],
  [62, 'Online', 'R', 85, 'r', 76, '10.0.1.120', 8, 'Offline', '9.1.0', '2015-05-19 09:15', '507630f3-13...'],
  [63, 'Offline', 'R', 98, 'R', 76, '10.0.1.156', 7, 'Offline', '9.1.0', '2015-04-16 11:11', '365f1213-75...'],
  [64, 'Online', 'P', 112, 'p', 94, '192.168.2....', 8, 'Offline', '9.1.0', '2015-05-05 12:42', '75ff5d71-d3...'],
  [65, 'Offline', 'K', 32, 'K', 90, '10.0.1.84', 7, 'Offline', '9.0.0', '2015-01-22 16:12', '110734bc-25...'],
  [66, 'Online', 'A', 85, 'A', 94, '10.0.20.14...', 8, 'Offline', '9.0.0', '2015-03-16 21:47', '32b1c213-c7...']
];

// Zamazane nazwy: szare kwadraty zamiast liter
function mozaika(szerokosc, ziarno, przerwy, moc) {
  let kwadraty = '';
  let los = ziarno * 7919 + 13;
  const kolumny = Math.floor(szerokosc / 4);
  const puste = przerwy.map(p => Math.round(kolumny * p));

  for (let i = 0; i < kolumny; i++) {
    for (let j = 0; j < 3; j++) {
      los = (los * 48271) % 2147483647;
      let alfa = (0.15 + (los / 2147483647) * 0.35) * moc;
      if (j === 0) alfa *= 0.25;
      if (j === 2) alfa *= 0.9;
      if (puste.includes(i)) alfa = 0.04;
      kwadraty += `<rect x="${i * 4}" y="${j * 4}" width="4" height="4" fill-opacity="${alfa.toFixed(2)}"/>`;
    }
  }
  return `<svg width="${szerokosc}" height="12" aria-hidden="true">${kwadraty}</svg>`;
}

function ikona(nazwa, w, h) {
  return `<svg width="${w}" height="${h}" aria-hidden="true"><use href="#${nazwa}"/></svg>`;
}

document.getElementById('drzewo').innerHTML = dzialy.map((nazwa, i) => {
  let teczka = ikona('teczka', 14, 13);
  if (i === 6) {
    teczka = '<svg width="14" height="13" aria-hidden="true"><use href="#teczka"/><path d="M0 0h3v4H0zM0 5h3v2H0z" fill="#d02020"/></svg>';
  }
  if (i === 7) {
    teczka = '<svg width="14" height="13" aria-hidden="true"><use href="#teczka"/><circle cx="10" cy="9" r="3.700" fill="#fff" stroke="#2266b0"/><path d="M6.500 9h7M10 5.500v7M7.500 7h5M7.500 11h5" stroke="#2266b0"/></svg>';
  }
  return `<li class="${i === 2 ? 'selected' : ''}"><a href="#">${ikona('strzalka', 12, 12)}${teczka}<span>${nazwa}</span></a></li>`;
}).join('');

document.getElementById('agenci').innerHTML = agenci.map((a, i) => {
  const [nr, status, litera, szer, literaDns, szerDns, ip, system, uwagi, wersja, czas, ident] = a;
  const uwagiIkona = uwagi === 'Online' ? ikona('ptaszek', 13, 12) : ikona('zegar', 12, 13);
  let pola = '';
  for (let k = 1; k <= 5; k++) {
    pola += `<td class="check"><input type="checkbox" checked aria-label="Komponent ${k}, wiersz ${nr}"></td>`;
  }
  return `<tr class="${i === 0 ? 'current ' : ''}${status.toLowerCase()}">
    <td class="nr">${nr}</td>
    <td class="status"><div class="with-icon">${ikona('komputer', 14, 14)}${status}</div></td>
    <td class="komputer"><div class="hidden-name"><span>${litera}</span>${mozaika(szer, nr, [0.12, 0.62], 1)}</div></td>
    <td class="dns"><div class="hidden-name"><span>${literaDns}</span>${mozaika(szerDns, nr + 40, [0.86], 0.7)}</div></td>
    <td>${ip}</td>
    <td>Microsoft Windows ${system}...</td>
    <td>S-1-5-21-448539723-115...</td>
    <td class="uwagi"><div class="with-icon">${uwagiIkona}${uwagi}</div></td>
    <td>${wersja}</td>
    <td>${czas}</td>
    <td>${ident}</td>
    ${pola}
  </tr>`;
}).join('');
```
